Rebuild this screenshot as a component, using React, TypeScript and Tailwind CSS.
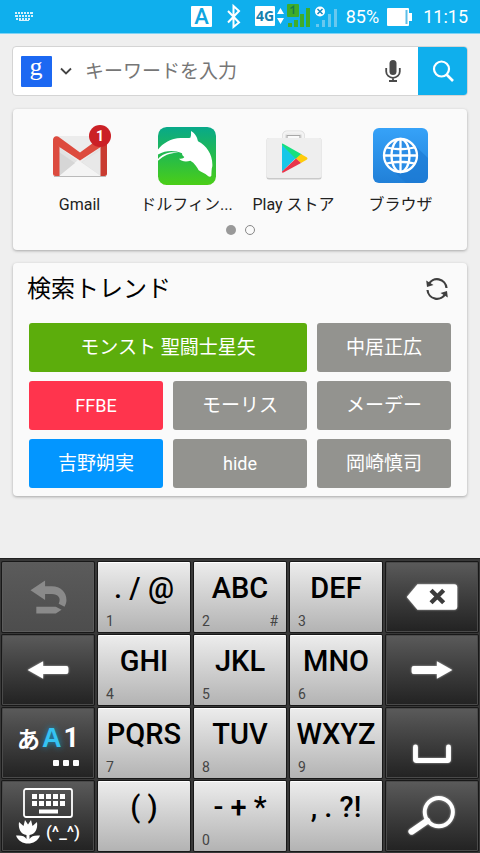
import { useState } from "react";
import type { ReactNode } from "react";
import clsx from "clsx";

const apps = [
  { name: "Gmail", label: "Gmail", icon: <GmailIcon />, badge: 1 },
  { name: "Dolphin", label: "ドルフィン...", icon: <DolphinIcon /> },
  { name: "Play", label: "Play ストア", icon: <PlayIcon /> },
  { name: "Browser", label: "ブラウザ", icon: <BrowserIcon /> },
];

const trends = [
  { text: "モンスト 聖闘士星矢", className: "col-span-2 bg-[#5cad0c]" },
  { text: "中居正広", className: "bg-[#93938f]" },
  { text: "FFBE", className: "bg-[#ff344d]", latin: true },
  { text: "モーリス", className: "bg-[#93938f]" },
  { text: "メーデー", className: "bg-[#93938f]" },
  { text: "吉野朔実", className: "bg-[#0396ff]" },
  { text: "hide", className: "bg-[#93938f]", latin: true },
  { text: "岡崎慎司", className: "bg-[#93938f]" },
];

function GmailIcon() {
  return (
    <svg viewBox="0 0 58 58" className="h-[58px] w-[58px]">
      <rect x="3" y="9" width="52" height="40" rx="2" fill="#ececec" />
      <path d="M8 20 29 36 50 20V49H8Z" fill="#e2e2e2" />
      <path d="M8 49 27 33 50 49Z" fill="#f4f4f4" />
      <path d="M8 25 24 36 8 49Z" fill="#d6d6d6" />
      <path d="M50 23 31 35 50 49Z" fill="#e8e8e8" />
      <path d="M2 13V46.500a2.500 2.500 0 0 0 2.500 2.500H8.500V20Z" fill="#dc4b3f" />
      <path d="M56 13V46.500a2.500 2.500 0 0 1-2.500 2.500H49.500V20Z" fill="#c93c31" />
      <path d="M2 13c0-4 4-5 6.500-2.500L29 25.500 49.500 10.500C52 8 56 9 56 13c0 2-1 3.500-2.500 4.500L29 33.500 4.500 17.500C3 16.500 2 15 2 13Z" fill="#dd4b3e" />
      <path d="M3 49.500H55" stroke="#aaa" strokeWidth="0.800" />
    </svg>
  );
}

function DolphinIcon() {
  return (
    <svg viewBox="0 0 174 174" className="h-[58px] w-[58px]">
      <defs>
        <linearGradient id="dolphin-bg" x1="0" y1="0" x2="0" y2="1">
          <stop offset="0" stopColor="#08a98a" />
          <stop offset="0.5" stopColor="#24bb4c" />
          <stop offset="1" stopColor="#4bce17" />
        </linearGradient>
        <clipPath id="dolphin-clip">
          <rect width="174" height="174" rx="26" />
        </clipPath>
      </defs>
      <g clipPath="url(#dolphin-clip)">
        <rect width="174" height="174" fill="url(#dolphin-bg)" />
        <path
          d="M-2 70C12 50 38 34 68 33 80 32 90 35 97 32 100 25 99 19 99 12 112 20 117 29 120 43 147 57 165 85 163 118 160 127 161 138 160 146 158 151 153 150 149 146 141 139 129 135 122 130 118 122 110 108 97 101 85 105 71 104 63 95 69 95 77 95 79 90 75 88 72 84 72 79 48 69 22 70-2 84Z"
          fill="#fff"
        />
        <path d="M-2 98C14 79 38 72 62 78 40 76 18 83-2 103Z" fill="#fff" />
      </g>
    </svg>
  );
}

function PlayIcon() {
  return (
    <svg viewBox="0 0 58 58" className="h-[58px] w-[58px]">
      <path d="M19 13V8.500A3 3 0 0 1 22 5.500H35A3 3 0 0 1 38 8.500V13" fill="none" stroke="#dcdcdc" strokeWidth="4" />
      <path d="M19 13V8.500A3 3 0 0 1 22 5.500H35A3 3 0 0 1 38 8.500V13" fill="none" stroke="#f3f3f3" strokeWidth="2.500" />
      <rect x="1.500" y="11" width="55" height="41.500" rx="2.500" fill="#c9c9c9" />
      <rect x="1.500" y="11" width="55" height="40" rx="2.500" fill="#eee" />
      <path d="M22 11V8.500H35V11" fill="none" stroke="#a8a8a8" strokeWidth="1.200" />
      <path d="M17 17.500V44.500L31 31Z" fill="#17c7e8" />
      <path d="M17 17.500Q16.500 16 18.500 17L37 27.500 31 32 17 18Z" fill="#16e07e" />
      <path d="M36 27 42 30.500Q43 31.500 42 32.500L36 36 31 31.500Z" fill="#ffcb0a" />
      <path d="M31 31.500 36 36 18.500 45.500Q16.500 46 17 44.500Z" fill="#e9344a" />
    </svg>
  );
}

function BrowserIcon() {
  return (
    <svg viewBox="0 0 58 58" className="h-[58px] w-[58px]">
      <defs>
        <linearGradient id="browser-bg" x1="0" y1="0" x2="0" y2="1">
          <stop offset="0" stopColor="#36a2f8" />
          <stop offset="1" stopColor="#2180d8" />
        </linearGradient>
      </defs>
      <rect x="1" y="1" width="55" height="55" rx="6" fill="url(#browser-bg)" />
      <path d="M40 16 56 31V50a6 6 0 0 1-6 6H34L16 39Z" fill="#1b78d2" opacity="0.600" />
      <g fill="none" stroke="#fff" strokeWidth="2.300">
        <circle cx="28.500" cy="28.500" r="16.500" fill="#2b8de6" />
        <ellipse cx="28.500" cy="28.500" rx="9" ry="16.500" />
        <path d="M28.500 12V45M12 28.500H45M14.500 20.500Q28.500 24 42.500 20.500M14.500 36.500Q28.500 33 42.500 36.500" />
      </g>
    </svg>
  );
}

function StatusIcons() {
  return (
    <svg viewBox="0 0 152 34" className="ml-auto h-[34px] w-[152px]" role="img" aria-label="Status">
      <rect x="0" y="6" width="21" height="21" rx="1" fill="#fff" />
      <text x="10.500" y="24" textAnchor="middle" fill="#10a5e0" className="font-['Roboto',sans-serif] text-[22px] font-medium">A</text>
      <path d="M37 11 48 22.500 42.500 27V6L48 11 37 22.500" fill="none" stroke="#fff" strokeWidth="2" />
      <rect x="64" y="6" width="20" height="20" rx="1" fill="#fff" />
      <text x="74" y="21" textAnchor="middle" fill="#177fae" className="font-['Noto_Sans',sans-serif] text-[14px] font-bold">4G</text>
      <path d="M86 14 89.500 8 93 14ZM86 18H93L89.500 24Z" fill="#fff" />
      <g fill="#3fac2a">
        <rect x="96" y="4" width="12" height="13" rx="1" />
        <path d="M97 23h4v4h-4zM103 20h4v7h-4zM109 14h4v13h-4zM115 8h4v19h-4z" />
      </g>
      <path d="M99.500 8.500 102.500 6.500V14" fill="none" stroke="#167a4a" strokeWidth="1.500" />
      <g fill="#68c8ef">
        <path d="M125 24h3v3h-3zM131 20h3v7h-3zM137 14h3v13h-3zM143 9h3v18h-3z" />
      </g>
      <circle cx="129" cy="11.500" r="5" fill="#fff" />
      <path d="M126.500 9 131.500 14M131.500 9 126.500 14" stroke="#1688bd" strokeWidth="1.500" />
    </svg>
  );
}

function StatusBar() {
  return (
    <header className="flex h-[34px] items-center border-b border-[#7fd3f5] bg-[#0fafed] pl-[15px] pr-3 font-['Roboto',sans-serif] text-[18px] text-white">
      <svg viewBox="0 0 18 11" className="h-[11px] w-[18px]" fill="#d6f1fc" role="img" aria-label="Keyboard">
        <path d="M0 1h2v2H0zM3 1h2v2H3zM6 1h2v2H6zM9 1h2v2H9zM12 1h2v2h-2zM15 1h3v2h-3zM0 4h3v2H0zM4 4h2v2H4zM7 4h2v2H7zM10 4h2v2h-2zM13 4h2v2h-2zM16 4h2v2h-2zM1 7h2v2H1zM4 7h2v2H4zM7 7h2v2H7zM10 7h2v2h-2zM13 7h2v2h-2zM4 9h10v1H4z" />
      </svg>
      <StatusIcons />
      <span className="ml-[3px]">85%</span>
      <svg viewBox="0 0 26 20" className="ml-[7px] h-5 w-[26px]" role="img" aria-label="Battery">
        <rect x="1" y="1" width="22" height="18" rx="1" fill="#fff" />
        <rect x="23" y="6" width="3" height="8" fill="#fff" />
        <path d="M20.500 3V17" stroke="#5cbfe8" strokeWidth="2" />
      </svg>
      <time className="ml-[11px]">11:15</time>
    </header>
  );
}

function SearchBox() {
  const [query, setQuery] = useState("");

  return (
    <form
      onSubmit={(e) => e.preventDefault()}
      className="-mx-px flex h-[50px] rounded border border-[#d4d4d4] bg-white"
    >
      <button type="button" aria-label="Search engine" className="flex items-center pl-2">
        <svg viewBox="0 0 31 31" className="h-[31px] w-[31px] overflow-visible">
          <rect width="31" height="31" rx="1" fill="#1c68f2" />
          <text x="15" y="19" textAnchor="middle" fill="#fff" className="font-['Liberation_Serif',serif] text-[26px]">g</text>
        </svg>
        <svg viewBox="0 0 12 8" className="ml-2 h-2 w-3" fill="none" stroke="#444" strokeWidth="1.800">
          <path d="M1 1.500 6 6.500 11 1.500" />
        </svg>
      </button>
      <input
        type="text"
        aria-label="キーワードを入力"
        value={query}
        onChange={(e) => setQuery(e.target.value)}
        placeholder="キーワードを入力"
        className="ml-[13px] min-w-0 flex-1 bg-transparent pt-[3px] text-[19px] text-gray-800 outline-none placeholder:text-[#767676]"
      />
      <button type="button" aria-label="Voice search" className="flex w-[51px] items-center justify-center">
        <svg viewBox="0 0 16 24" className="h-6 w-4" fill="none" stroke="#4a4a4a" strokeWidth="1.800">
          <rect x="4.500" y="1" width="7" height="15" rx="3.500" fill="#4a4a4a" stroke="none" />
          <path d="M1.200 9V12.500a6.800 6.300 0 0 0 13.600 0V9M8 18.500V22M4 22H12" />
        </svg>
      </button>
      <button type="submit" aria-label="Search" className="flex w-[49px] items-center justify-center rounded-r-[3px] bg-[#0fafed]">
        <svg viewBox="0 0 22 22" className="h-[22px] w-[22px]" fill="none" stroke="#fff" strokeWidth="2.200">
          <circle cx="9.500" cy="9" r="7.500" />
          <path d="M14.500 14.500 21 21" strokeWidth="2.600" />
        </svg>
      </button>
    </form>
  );
}

function AppsCard() {
  return (
    <section className="rounded bg-[#fafafa] pb-[15px] pt-[18px] shadow-[0_1px_3px_#a8a8a8]">
      <div className="flex justify-between px-[13px]">
        {apps.map((app) => (
          <button key={app.name} type="button" className="relative flex w-[108px] flex-col items-center">
            {app.icon}
            {app.badge && (
              <span className="absolute right-[22px] -top-[2px] flex h-[22px] w-[22px] items-center justify-center rounded-full bg-[#cb2026] text-[14px] font-bold text-white">
                {app.badge}
              </span>
            )}
            <span className="mt-[8px] whitespace-nowrap text-[16px] leading-6 text-[#222]">{app.label}</span>
          </button>
        ))}
      </div>
      <div className="mt-[8px] flex justify-center gap-[9px]">
        <span className="h-[10px] w-[10px] rounded-full bg-[#999]" />
        <span className="h-[10px] w-[10px] rounded-full border border-[#888]" />
      </div>
    </section>
  );
}

function TrendsCard() {
  return (
    <section className="rounded bg-[#fafafa] px-4 pb-2 shadow-[0_1px_3px_#a8a8a8]">
      <div className="flex h-[60px] items-center justify-between pb-[9px]">
        <h2 className="-ml-[2px] text-[24px] leading-9 text-black">検索トレンド</h2>
        <button type="button" aria-label="Refresh" className="mr-[2px]">
          <svg viewBox="0 0 24 24" className="h-6 w-6" fill="none" stroke="#3f3f3f" strokeWidth="2.200">
            <path d="M3.500 7.500A9.500 9.500 0 0 1 21.500 11M20.500 16.500A9.500 9.500 0 0 1 2.500 13" />
            <path d="M1.200 3.500 2 10 8.500 8ZM22.800 20.500 22 14 15.500 16Z" fill="#3f3f3f" stroke="none" />
          </svg>
        </button>
      </div>
      <div className="grid grid-cols-3 gap-x-[10px] gap-y-[9px]">
        {trends.map((trend) => (
          <button
            key={trend.text}
            type="button"
            className={clsx(
              "h-[49px] rounded-[3px] text-white",
              trend.latin ? "text-[18px]" : "pt-[2px] text-[19px]",
              trend.className
            )}
          >
            {trend.text}
          </button>
        ))}
      </div>
    </section>
  );
}

function CharKey({ label, digit, extra }: { label: string; digit?: string; extra?: string }) {
  return (
    <button
      type="button"
      className="flex h-[70px] flex-col justify-between rounded-[1px] border-t border-white bg-gradient-to-b from-[#ececec] to-[#b3b3b3] px-2 shadow-[0_0_0_1px_#181818]"
    >
      <span className="flex h-[52px] w-full items-center justify-center whitespace-pre text-[29px] font-medium text-black">
        {label}
      </span>
      <span className="flex h-[17px] w-full items-start justify-between text-[14px] leading-3 text-[#444]">
        <span>{digit}</span>
        <span>{extra}</span>
      </span>
    </button>
  );
}

function DarkKey({ label, disabled, children }: { label: string; disabled?: boolean; children: ReactNode }) {
  return (
    <button
      type="button"
      aria-label={label}
      disabled={disabled}
      className={clsx(
        "flex h-[70px] flex-col items-center justify-center rounded-[1px] border shadow-[0_0_0_1px_#181818]",
        disabled
          ? "border-[#5c5c5c] bg-gradient-to-b from-[#5b5b5b] to-[#4d4d4d]"
          : "border-[#4a4a4a] bg-gradient-to-b from-[#5a5a5a] to-[#232323]"
      )}
    >
      {children}
    </button>
  );
}

// Glyphs are drawn on a 92x70 grid, the size of one key
function KeyGlyph({ children }: { children: ReactNode }) {
  return (
    <svg viewBox="0 0 92 70" className="h-[70px] w-[92px] drop-shadow-[0_0_1px_#aaa]" fill="#fff">
      {children}
    </svg>
  );
}

function Keyboard() {
  return (
    <div className="mt-auto grid grid-cols-5 gap-x-1 gap-y-[3px] border-t border-[#222] bg-[#383838] px-[2px] pb-[2px] pt-[3px] font-['Roboto',sans-serif]">
      <DarkKey label="Undo" disabled>
        <svg viewBox="0 0 92 70" className="h-[70px] w-[92px]" fill="#8a8a8a">
          <path d="M28 28 43 18V24H50C59 24 65 30 65 38 65 41 64 43 63 45L57 42C60 36 56 32 50 32H43V38Z" />
          <path d="M34 45H54L60 48 54 52H34Z" />
        </svg>
      </DarkKey>
      <CharKey label=". / @" digit="1" />
      <CharKey label="ABC" digit="2" extra="#" />
      <CharKey label="DEF" digit="3" />
      <DarkKey label="Backspace">
        <KeyGlyph>
          <path d="M20 35 31 22H69Q72 22 72 25V45Q72 48 69 48H31Z" />
          <path d="M45 28 58 41M58 28 45 41" stroke="#3c3c3c" strokeWidth="4.500" />
        </KeyGlyph>
      </DarkKey>

      <DarkKey label="Left">
        <KeyGlyph>
          <path d="M25 35 41 26V31H65Q67 31 67 33V37Q67 39 65 39H41V44Z" />
        </KeyGlyph>
      </DarkKey>
      <CharKey label="GHI" digit="4" />
      <CharKey label="JKL" digit="5" />
      <CharKey label="MNO" digit="6" />
      <DarkKey label="Right">
        <KeyGlyph>
          <path d="M67 35 51 26V31H27Q25 31 25 33V37Q25 39 27 39H51V44Z" />
        </KeyGlyph>
      </DarkKey>

      <DarkKey label="Input mode">
        <span className="flex items-center pt-2 font-['Noto_Sans_CJK_JP',sans-serif] text-[23px] font-bold leading-7 text-white">
          <span>あ</span>
          <span className="ml-[2px] font-['Liberation_Sans',sans-serif] text-[27px] text-[#35c3f3] [text-shadow:0_0_6px_#1593c4]">A</span>
          <span className="ml-[2px] font-['Roboto',sans-serif] text-[27px]">1</span>
        </span>
        <span className="ml-[36px] flex gap-1 pb-1 pt-2">
          <span className="h-[6px] w-[6px] rounded-[1px] bg-white" />
          <span className="h-[6px] w-[6px] rounded-[1px] bg-white" />
          <span className="h-[6px] w-[6px] rounded-[1px] bg-white" />
        </span>
      </DarkKey>
      <CharKey label="PQRS" digit="7" />
      <CharKey label="TUV" digit="8" />
      <CharKey label="WXYZ" digit="9" />
      <DarkKey label="Space">
        <KeyGlyph>
          <path d="M29 39V52Q29 53 30 53H62Q63 53 63 52V39" fill="none" stroke="#fff" strokeWidth="5" strokeLinecap="round" />
        </KeyGlyph>
      </DarkKey>

      <DarkKey label="Emoji and keyboard">
        <svg viewBox="0 0 50 30" className="h-[30px] w-[50px]" fill="#fff">
          <rect x="1" y="1" width="48" height="28" rx="2" fill="none" stroke="#fff" strokeWidth="1.800" />
          <path d="M9 6h5v5H9zM16 6h5v5h-5zM23 6h5v5h-5zM30 6h5v5h-5zM37 6h5v5h-5zM9 13h5v5H9zM16 13h5v5h-5zM23 13h5v5h-5zM30 13h5v5h-5zM37 13h5v5h-5zM16 21.500h19v4h-19z" />
        </svg>
        <span className="flex items-center gap-[6px] pt-[2px]">
          <svg viewBox="0 0 24 24" className="h-6 w-6" fill="#fff">
            <path d="M3 2 7.500 6 9 0 12 4.500 15 0 16.500 6 21 2C22 9 19 14.500 13.500 15V19C15 16 19 15 24 15.500 22 21 17 23.500 12 23.500 7 23.500 2 21 0 15.500 5 15 9 16 10.500 19V15C5 14.500 2 9 3 2Z" />
          </svg>
          <span className="text-[17px] font-medium leading-6 text-white">(^_^)</span>
        </span>
      </DarkKey>
      <CharKey label="( )" />
      <CharKey label="- + *" digit="0" />
      <CharKey label=", . ?!" />
      <DarkKey label="Search">
        <KeyGlyph>
          <g fill="none" stroke="#fff">
            <circle cx="53" cy="31" r="14.500" strokeWidth="4" />
            <path d="M41 40 25 51" strokeWidth="6.500" strokeLinecap="round" />
          </g>
        </KeyGlyph>
      </DarkKey>
    </div>
  );
}

export default function App() {
  return (
    <div className="flex min-h-screen flex-col bg-[#efefef] font-['Roboto','Noto_Sans_CJK_JP',sans-serif]">
      <StatusBar />
      <main className="flex flex-col gap-[13px] px-[13px] py-3">
        <SearchBox />
        <AppsCard />
        <TrendsCard />
      </main>
      <Keyboard />
    </div>
  );
}
